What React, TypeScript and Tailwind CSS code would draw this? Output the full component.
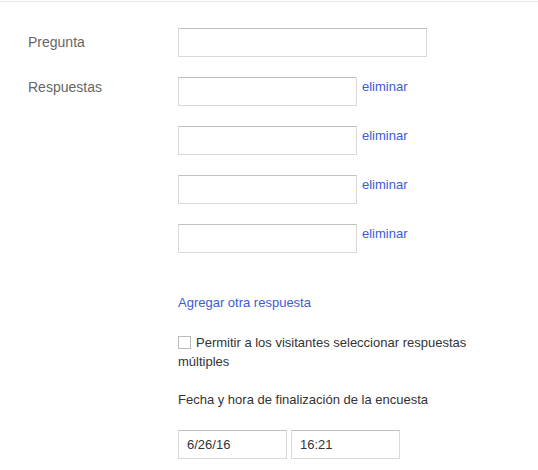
import React from "react";

const inputCls = "h-[29px] border border-[#d9d9d9] border-t-[#c0c0c0] bg-white outline-none";

export default function App() {
  const answers = [0, 1, 2, 3];
  return (
    <div className="h-[470px] w-[538px] overflow-hidden bg-white font-['Liberation_Sans',Arial,sans-serif] text-[13px] leading-[19px] text-[#333]">
      <div className="mt-px h-[2px] border-t border-[#e5e5e5]" />
      <div className="flex pt-[25px] pl-[28px]">
        <div className="w-[150px] pt-[5px] text-[14px] text-[#666]">Pregunta</div>
        <input className={`${inputCls} w-[249px]`} />
      </div>
      <div className="flex pt-[20px] pl-[28px]">
        <div className="w-[150px] pt-px text-[14px] text-[#666]">Respuestas</div>
        <div className="flex flex-col">
          <div className="flex flex-col gap-[20px]">
            {answers.map((a) => (
              <div key={a} className="flex items-start">
                <input className={`${inputCls} w-[179px]`} />
                <a href="#" className="ml-[5px] text-[#3b5bd8]">eliminar</a>
              </div>
            ))}
          </div>
          <a href="#" className="mt-[40px] text-[#3b5bd8]">Agregar otra respuesta</a>
          <label className="mt-[21px] block w-[300px]">
            <span className="mr-[5px] inline-block h-[13px] w-[13px] translate-y-[2px] border border-[#bbb] bg-white" />
            Permitir a los visitantes seleccionar respuestas múltiples
          </label>
          <div className="mt-[19px]">Fecha y hora de finalización de la encuesta</div>
          <div className="mt-[21px] flex gap-[4px]">
            <input className={`${inputCls} w-[109px] px-[8px] text-[13px] text-[#333]`} defaultValue="6/26/16" />
            <input className={`${inputCls} w-[109px] px-[8px] text-[13px] text-[#333]`} defaultValue="16:21" />
          </div>
        </div>
      </div>
    </div>
  );
}
